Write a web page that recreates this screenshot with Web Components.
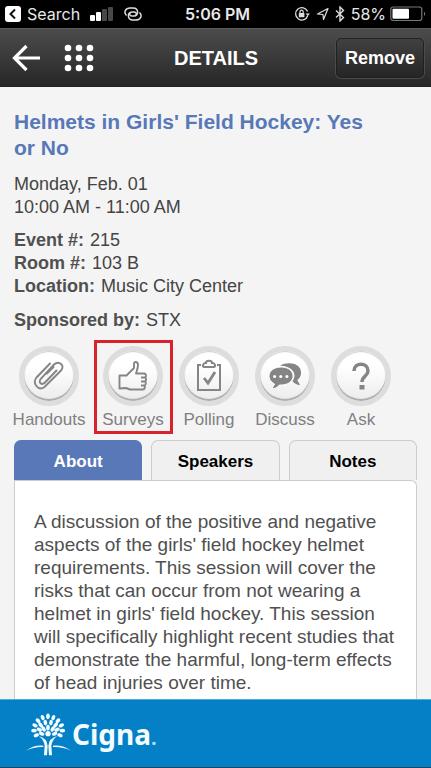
<!DOCTYPE html>
<html lang="en">
<head>
<meta charset="utf-8">
<meta name="viewport" content="width=device-width, initial-scale=1">
<title>Details</title>
<style>
  body { margin: 0; background: #f4f4f4; font-family: "Liberation Sans", Arial, sans-serif; color: #444; }
</style>
</head>
<body>
<session-app></session-app>
<script>
const define = (name, html, setup) => {
  const template = document.createElement('template');
  template.innerHTML = html;
  customElements.define(name, class extends HTMLElement {
    constructor() {
      super();
      this.attachShadow({ mode: 'open' }).append(template.content.cloneNode(true));
    }
    connectedCallback() { if (setup) setup(this, this.shadowRoot); }
  });
};

define('status-bar', `
<style>
  :host { display: grid; grid-template-columns: 1fr auto 1fr; align-items: center; height: 28px; padding: 0 5px; background: #000; color: #e8e8e8; font: 16px/28px Inter, sans-serif; }
  div { display: flex; align-items: center; }
  .left { gap: 6px; }
  .back { font-size: 16px; }
  .signal { margin: 0 4px; }
  .time { font-weight: 600; padding-left: 4px; }
  .right { justify-content: flex-end; gap: 6px; }
  .charge { gap: 4px; }
  svg { display: block; flex: none; }
</style>
<div class="left">
  <svg width="16" height="16" viewBox="0 0 16 16"><rect width="16" height="16" rx="3" fill="#fff"/><path d="M10 3.500 5.500 8 10 12.500" fill="none" stroke="#111" stroke-width="2"/></svg>
  <span class="back">Search</span>
  <svg class="signal" width="24" height="14" viewBox="0 0 24 14"><g fill="#fff"><rect x="0" y="8" width="5" height="6" rx="1"/><rect x="6" y="5" width="5" height="9" rx="1"/></g><g fill="#484848"><rect x="12" y="2" width="5" height="12" rx="1"/><rect x="18" y="0" width="5" height="14" rx="1"/></g></svg>
  <svg width="18" height="14" viewBox="0 0 18 14" fill="none" stroke="#ddd" stroke-width="1.500"><path d="M2.500 8.500C-1 5 2 1 6 1h3c6 0 6 8 1 8H8C5 9 5 6 7 5.500"/><path d="M15.500 5.500c3.500 3.500.5 7.500-3.500 7.500H9C3 13 3 5 8 5h2c3 0 3 3 1 3.500"/></svg>
</div>
<span class="time">5:06 PM</span>
<div class="right">
  <svg width="16" height="16" viewBox="0 0 16 16"><path d="M13.800 9.500A6.200 6.200 0 1 1 13.600 5.500" fill="none" stroke="#ddd" stroke-width="1.300"/><path d="M11.500 7.500h4.500L13.800 10z" fill="#ddd"/><rect x="4.800" y="7" width="5.600" height="4.200" rx=".5" fill="#ddd"/><path d="M6 7V5.800a1.600 1.600 0 0 1 3.200 0V7" fill="none" stroke="#ddd" stroke-width="1.200"/></svg>
  <svg width="13" height="14" viewBox="0 0 13 14"><path d="M1.500 7 12 1.500 7.500 12.500 7 7.500z" fill="none" stroke="#ddd" stroke-width="1.200" stroke-linejoin="round"/></svg>
  <svg width="10" height="16" viewBox="0 0 10 16"><path d="M1 4.500 8.500 11.500 5 15V1l3.500 3.500L1 11.500" fill="none" stroke="#ddd" stroke-width="1.400"/></svg>
  <div class="charge"><span>58%</span>
  <svg width="36" height="16" viewBox="0 0 36 16"><rect x=".8" y="1" width="31" height="13.500" rx="2.500" fill="none" stroke="#777" stroke-width="1.200"/><rect x="2.500" y="2.800" width="16.500" height="10" rx="1" fill="#fff"/><path d="M34 5.500q2 2.300 0 4.600z" fill="#888"/></svg></div>
</div>`);

define('nav-bar', `
<style>
  :host { display: grid; grid-template-columns: 1fr auto 1fr; align-items: center; height: 59px; box-sizing: border-box; padding: 0 7px 0 12px; border-top: 1px solid #5a5a5a; border-bottom: 1px solid #222; background: linear-gradient(#4c4c4c, #272727); color: #fff; }
  .actions { display: flex; gap: 22px; }
  button { font: inherit; color: inherit; background: none; border: 0; padding: 0; cursor: pointer; }
  svg { display: block; }
  h1 { margin: 0; padding-right: 4px; font-size: 20px; line-height: 24px; }
  .remove { justify-self: end; height: 40px; padding: 1px 8px 0; font-size: 18px; font-weight: bold; border: 1px solid #202020; border-radius: 5px; background: linear-gradient(#414141, #252525); box-shadow: 0 0 0 1px #4b4b4b; }
</style>
<div class="actions">
  <button aria-label="Back"><svg width="30" height="28" viewBox="0 0 30 28"><path d="M14.500 2 2.500 14l12 12M3 14h25" fill="none" stroke="#fff" stroke-width="3.200"/></svg></button>
  <button aria-label="Menu"><svg width="30" height="28" viewBox="0 0 30 28" fill="#fff"><circle cx="4" cy="4" r="3.300"/><circle cx="15" cy="4" r="3.300"/><circle cx="26" cy="4" r="3.300"/><circle cx="4" cy="14" r="3.300"/><circle cx="15" cy="14" r="3.300"/><circle cx="26" cy="14" r="3.300"/><circle cx="4" cy="24" r="3.300"/><circle cx="15" cy="24" r="3.300"/><circle cx="26" cy="24" r="3.300"/></svg></button>
</div>
<h1><slot></slot></h1>
<button class="remove">Remove</button>`);

define('session-info', `
<style>
  :host { display: block; padding: 22px 14px 0; font-size: 18px; line-height: 23px; }
  h2 { margin: 0 0 12px; padding-right: 32px; font-size: 21px; line-height: 26px; color: #5878b8; }
  p, dl, dd { margin: 0; }
  dl { margin-top: 10px; }
  dl div { display: flex; gap: 6px; }
  dt { font-weight: bold; color: #505050; }
  .sponsor { margin-top: 11px; }
</style>
<h2>Helmets in Girls' Field Hockey: Yes or No</h2>
<p>Monday, Feb. 01</p>
<p>10:00 AM - 11:00 AM</p>
<dl>
  <div><dt>Event #:</dt><dd>215</dd></div>
  <div><dt>Room #:</dt><dd>103 B</dd></div>
  <div><dt>Location:</dt><dd>Music City Center</dd></div>
  <div class="sponsor"><dt>Sponsored by:</dt><dd>STX</dd></div>
</dl>`);

define('round-action', `
<style>
  :host { display: block; position: relative; min-width: 77px; }
  button { display: flex; flex-direction: column; align-items: center; gap: 4px; width: 100%; margin: 0; padding: 0; border: 0; background: none; font: 17px/20px "Liberation Sans", Arial, sans-serif; color: #808080; cursor: pointer; }
  .disc { box-sizing: border-box; display: grid; place-items: center; width: 60px; height: 60px; border: 5px solid #dddddd; border-radius: 50%; background: linear-gradient(#fff 30%, #ececec); box-shadow: inset 0 -2px 1px #aaa, inset 0 1px 1px #ccc; }
  .mark { display: none; }
  :host([highlighted]) .mark { display: block; position: absolute; inset: -6px -2px -4px -1px; border: 3px solid #d8232a; pointer-events: none; }
  ::slotted(svg) { display: block; }
</style>
<button><span class="disc"><slot name="icon"></slot></span><span><slot></slot></span></button>
<span class="mark"></span>`);

define('action-row', `
<style>
  :host { display: flex; padding: 14px 14px 0 11px; }
  ::slotted(*) { min-width: 76px; }
  ::slotted(:first-child) { margin-right: 8px; }
</style><slot></slot>`);

define('tab-strip', `
<style>
  :host { display: grid; grid-template-columns: repeat(3, 1fr); gap: 9px; margin: 10px 14px 0; }
  button { height: 40px; padding: 2px 0 0; border: 1px solid #ccc; border-bottom: 0; border-radius: 7px 7px 0 0; background: #f0f0f0; color: #000; font: bold 17px/22px "Liberation Sans", Arial, sans-serif; cursor: pointer; }
  button[aria-selected="true"] { background: #5878b8; border-color: #5878b8; color: #fff; }
</style>
<div role="tablist" style="display: contents">
  <button role="tab" aria-selected="true">About</button>
  <button role="tab" aria-selected="false">Speakers</button>
  <button role="tab" aria-selected="false">Notes</button>
</div>`, (host, root) => {
  const tabs = [...root.querySelectorAll('button')];
  tabs.forEach(tab => tab.onclick = () => tabs.forEach(t => t.setAttribute('aria-selected', String(t === tab))));
});

define('tab-panel', `
<style>
  :host { display: block; flex: 1; margin: 0 14px; padding: 29px 15px 3px 19px; border: 1px solid #ccc; border-bottom: 0; border-radius: 0 6px 0 0; background: #fff; font-size: 19px; line-height: 23px; color: #505050; }
  p { margin: 0; }
</style><p><slot></slot></p>`);

define('sponsor-banner', `
<style>
  :host { display: block; background: #0380c6; border-top: 1px solid #4faed6; border-bottom: 1px solid #173f5f; box-sizing: border-box; }
  a { display: flex; align-items: center; gap: 1px; height: 67px; padding: 0 26px; color: #f3fcff; text-decoration: none; font: 700 28px/40px "Noto Sans", sans-serif; }
  a span { padding-top: 4px; }
  svg { display: block; }
  small { font-size: 20px; color: #a9daf2; }
</style>
<a href="#sponsor"><svg width="45" height="44" viewBox="79 65 135 132" fill="#f3fcff" aria-hidden="true">
  <g id="leaves"></g>
  <circle cx="145" cy="130" r="8"/>
  <path d="M117 137q15 10 18 29l-2 29h9l2-28q-2-24-27-30M173 137q-15 10-18 29l2 29h-9l-2-28q2-24 27-30"/>
  <path d="M79 181q24-18 52-15v4q-28-1-52 11M214 181q-24-18-54-15v4q30-1 54 11"/>
</svg><span>Cigna<small>.</small></span></a>`, (host, root) => {
  // Leaves: [x, y, rotation in degrees]
  const leaves = [[145,78,0],[129,82,-22],[161,82,22],[115,91,-45],[175,91,45],[106,105,-65],[185,105,65],[103,121,-88],[188,121,88],[110,135,-110],[181,135,110],
    [137,97,-12],[154,97,12],[123,104,-35],[168,104,35],[119,118,-65],[172,118,65],[145,112,0],[132,116,-28],[159,116,28],[126,130,-70],[165,130,70]];
  root.querySelector('#leaves').innerHTML = leaves.map(([x, y, r]) => `<ellipse cx="${x}" cy="${y}" rx="5.500" ry="8.500" transform="rotate(${r} ${x} ${y})"/>`).join('');
});

define('session-app', `
<style>
  :host { display: flex; flex-direction: column; min-height: 100vh; }
</style>
<status-bar></status-bar>
<nav-bar>DETAILS</nav-bar>
<session-info></session-info>
<action-row>
  <round-action>Handouts
    <svg slot="icon" width="32" height="30" viewBox="0 0 32 30" fill="none" stroke="#858585" stroke-width="1.900" stroke-linecap="round"><path d="M17 2.500 3.500 16.500C-1 22 5 30.500 11.500 26L28 9.500c4.500-5-2-10.500-7-6L8 17.500c-3.500 4.500 1 7 4 4L23.500 9.500M20.500 6 14 12.500"/></svg>
  </round-action>
  <round-action highlighted>Surveys
    <svg slot="icon" width="30" height="32" viewBox="0 0 30 32" fill="none" stroke="#858585" stroke-width="1.900" stroke-linejoin="round"><path d="M1.500 15.500h7l7.500-7.500V3.500c0-2.500 4-2 4 1.500 0 3-1 5-2 8.500h8c2.500 0 2.500 4 .5 4 2 0 2 4 0 4 2 0 1.500 4-.5 4 1.500 0 1 4-1 4H12l-4-1.500-6.500.5zM23 17.500h3.500M23 21.500h3.500M23 25.500h3"/></svg>
  </round-action>
  <round-action>Polling
    <svg slot="icon" width="28" height="34" viewBox="0 0 28 34" fill="none" stroke="#858585" stroke-width="2"><path d="M6 6H3v25h22V6h-3"/><path d="M9 8c-2-1-1-4 2-4 0-3 6-3 6 0 3 0 4 3 2 4z"/><path d="m9 19 4 5 7-11" stroke-width="2.800"/></svg>
  </round-action>
  <round-action>Discuss
    <svg slot="icon" width="34" height="29" viewBox="0 0 36 30" fill="#858585"><path d="M13 3.500C20-1 35 0 35 11c0 4-2 6-4 8l3 5c-4 0-6-2-8-4 5-7 1-16-13-16.500z"/><path d="M14 5c16 0 17 18 1 19h-3c-2 3-5 4-8 4l3-5C-3 18 0 5 14 5z" stroke="#fff" stroke-width="1"/><g fill="#fff"><circle cx="7" cy="15" r="1.600"/><circle cx="13.500" cy="15" r="1.600"/><circle cx="20" cy="15" r="1.600"/></g></svg>
  </round-action>
  <round-action>Ask
    <svg slot="icon" width="20" height="30" viewBox="0 0 20 30"><path d="M3 10c0-9 14-9 14 0 0 5-6 5-6 11" fill="none" stroke="#858585" stroke-width="3.500"/><path d="M8.500 24h5v4.500h-5z" fill="#858585"/></svg>
  </round-action>
</action-row>
<tab-strip></tab-strip>
<tab-panel>A discussion of the positive and negative aspects of the girls' field hockey helmet requirements. This session will cover the risks that can occur from not wearing a helmet in girls' field hockey. This session will specifically highlight recent studies that demonstrate the harmful, long-term effects of head injuries over time.</tab-panel>
<sponsor-banner></sponsor-banner>`);
</script>
</body>
</html>
